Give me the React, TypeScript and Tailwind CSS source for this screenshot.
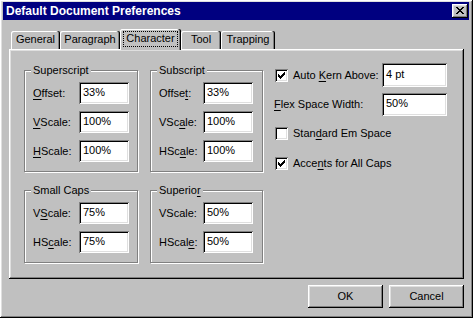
import React from "react"

const raised =
  "shadow-[inset_-1px_-1px_#000,inset_1px_1px_#fff,inset_-2px_-2px_#808080,inset_2px_2px_#dfdfdf]"
const sunken =
  "shadow-[inset_1px_1px_#808080,inset_-1px_-1px_#fff,inset_2px_2px_#000,inset_-2px_-2px_#dfdfdf]"

function Key({ text, at }: { text: string; at?: number }) {
  if (at === undefined) return <>{text}</>
  return (
    <>
      {text.slice(0, at)}
      <span className="underline decoration-1 underline-offset-[2px]">{text[at]}</span>
      {text.slice(at + 1)}
    </>
  )
}

function Field({
  label,
  at,
  value,
  labelWidth,
}: {
  label: string
  at?: number
  value: string
  labelWidth: string
}) {
  return (
    <div className="flex h-[22px] items-center">
      <span className={labelWidth}>
        <Key text={label} at={at} />
      </span>
      <div className={`flex h-[22px] w-[50px] items-center bg-white pb-[2px] pl-[4px] ${sunken}`}>
        {value}
      </div>
    </div>
  )
}

function Group({
  title,
  at,
  width,
  children,
}: {
  title: string
  at?: number
  width: string
  children: React.ReactNode
}) {
  return (
    <div
      className={`${width} border border-[#808080] pb-[9px] pl-[8px] shadow-[inset_1px_1px_#fff,1px_1px_#fff]`}
    >
      <div className="-ml-[2px] -mt-[7px] w-fit bg-[#c0c0c0] px-[2px] leading-[13px]">
        <Key text={title} at={at} />
      </div>
      <div className="mt-[5px] flex flex-col gap-[7px]">{children}</div>
    </div>
  )
}

function Check() {
  return (
    <svg width="7" height="7" viewBox="0 0 7 7" shapeRendering="crispEdges">
      <polygon points="0,2 2,4 7,-1 7,2 2,7 0,5" fill="#000" />
    </svg>
  )
}

function Checkbox({ checked }: { checked?: boolean }) {
  return (
    <div className={`flex size-[13px] shrink-0 items-center justify-center bg-white ${sunken}`}>
      {checked && <Check />}
    </div>
  )
}

function Tab({ label, width, selected }: { label: string; width: string; selected?: boolean }) {
  if (selected) {
    return (
      <div
        className={`relative z-10 -mb-[1px] flex h-[21px] ${width} items-start justify-center rounded-t-[2px] bg-[#c0c0c0] pt-[2px] shadow-[inset_-1px_0_#000,inset_-2px_0_#808080,inset_1px_1px_#fff]`}
      >
        <span className="flex h-[16px] items-center border border-dotted border-black px-[2px] pb-[1px]">
          {label}
        </span>
      </div>
    )
  }
  return (
    <div
      className={`flex h-[18px] ${width} items-center justify-center rounded-t-[2px] bg-[#c0c0c0] pb-[1px] shadow-[inset_-1px_0_#000,inset_-2px_0_#808080,inset_1px_1px_#fff]`}
    >
      {label}
    </div>
  )
}

export default function App() {
  return (
    <div
      className={`flex h-[318px] w-[473px] flex-col bg-[#c0c0c0] pl-[3px] pr-[4px] pt-[2px] font-['Liberation_Sans',Arial,sans-serif] text-[11px] leading-none text-black ${raised}`}
    >
      {/* title bar */}
      <div className="flex h-[18px] items-center justify-between bg-[#000080] pl-[3px] pr-[1px]">
        <span className="text-[12px] font-bold text-white">Default Document Preferences</span>
        <button className={`flex h-[14px] w-[16px] items-center justify-center bg-[#c0c0c0] pb-[1px] ${raised}`}>
          <svg width="8" height="7" viewBox="0 0 8 7" shapeRendering="crispEdges">
            <path d="M0 0h2l2 2.3 2-2.3h2l-3 3.5 3 3.5h-2l-2-2.3-2 2.3h-2l3-3.5z" fill="#000" />
          </svg>
        </button>
      </div>

      <div className="ml-[6px] mt-[9px] w-[455px]">
        {/* tabs */}
        <div className="flex h-[20px] items-end pl-[2px]">
          <Tab label="General" width="w-[49px]" />
          <Tab label="Paragraph" width="w-[60px]" />
          <Tab label="Character" width="w-[61px]" selected />
          <Tab label="Tool" width="w-[40px]" />
          <Tab label="Trapping" width="w-[54px]" />
        </div>

        {/* tab panel */}
        <div className={`flex h-[230px] items-start pl-[15px] pt-[14px] ${raised}`}>
          <div className="mt-[7px] grid grid-cols-[114px_113px] gap-x-[12px] gap-y-[18px]">
            <Group title="Superscript" width="w-[114px]">
              <Field label="Offset:" at={0} value="33%" labelWidth="w-[46px]" />
              <Field label="VScale:" at={0} value="100%" labelWidth="w-[46px]" />
              <Field label="HScale:" at={0} value="100%" labelWidth="w-[46px]" />
            </Group>
            <Group title="Subscript" width="w-[113px]">
              <Field label="Offset:" at={5} value="33%" labelWidth="w-[44px]" />
              <Field label="VScale:" at={3} value="100%" labelWidth="w-[44px]" />
              <Field label="HScale:" at={3} value="100%" labelWidth="w-[44px]" />
            </Group>
            <Group title="Small Caps" width="w-[114px]">
              <Field label="VScale:" at={1} value="75%" labelWidth="w-[46px]" />
              <Field label="HScale:" at={2} value="75%" labelWidth="w-[46px]" />
            </Group>
            <Group title="Superior" at={7} width="w-[113px]">
              <Field label="VScale:" value="50%" labelWidth="w-[44px]" />
              <Field label="HScale:" at={5} value="50%" labelWidth="w-[44px]" />
            </Group>
          </div>

          <div className="ml-[11px] flex w-[173px] flex-col">
            <div className="flex h-[24px] items-center justify-between">
              <div className="ml-[1px] flex items-center gap-[5px]">
                <Checkbox checked />
                <span>
                  <Key text="Auto Kern Above:" at={5} />
                </span>
              </div>
              <div className={`flex h-[24px] w-[65px] items-center bg-white pb-[2px] pl-[4px] ${sunken}`}>4 pt</div>
            </div>
            <div className="mt-[6px] flex h-[23px] items-center justify-between">
              <span>
                <Key text="Flex Space Width:" at={0} />
              </span>
              <div className={`flex h-[23px] w-[65px] items-center bg-white pb-[2px] pl-[4px] ${sunken}`}>50%</div>
            </div>
            <div className="ml-[1px] mt-[11px] flex h-[13px] items-center gap-[5px]">
              <Checkbox />
              <span>
                <Key text="Standard Em Space" at={4} />
              </span>
            </div>
            <div className="ml-[1px] mt-[17px] flex h-[13px] items-center gap-[5px]">
              <Checkbox checked />
              <span>
                <Key text="Accents for All Caps" at={4} />
              </span>
            </div>
          </div>
        </div>

        {/* buttons */}
        <div className="mt-[6px] flex justify-end gap-[6px]">
          <button className={`h-[23px] w-[75px] bg-[#c0c0c0] pb-[1px] ${raised}`}>OK</button>
          <button className={`h-[23px] w-[75px] bg-[#c0c0c0] pb-[1px] ${raised}`}>Cancel</button>
        </div>
      </div>
    </div>
  )
}
